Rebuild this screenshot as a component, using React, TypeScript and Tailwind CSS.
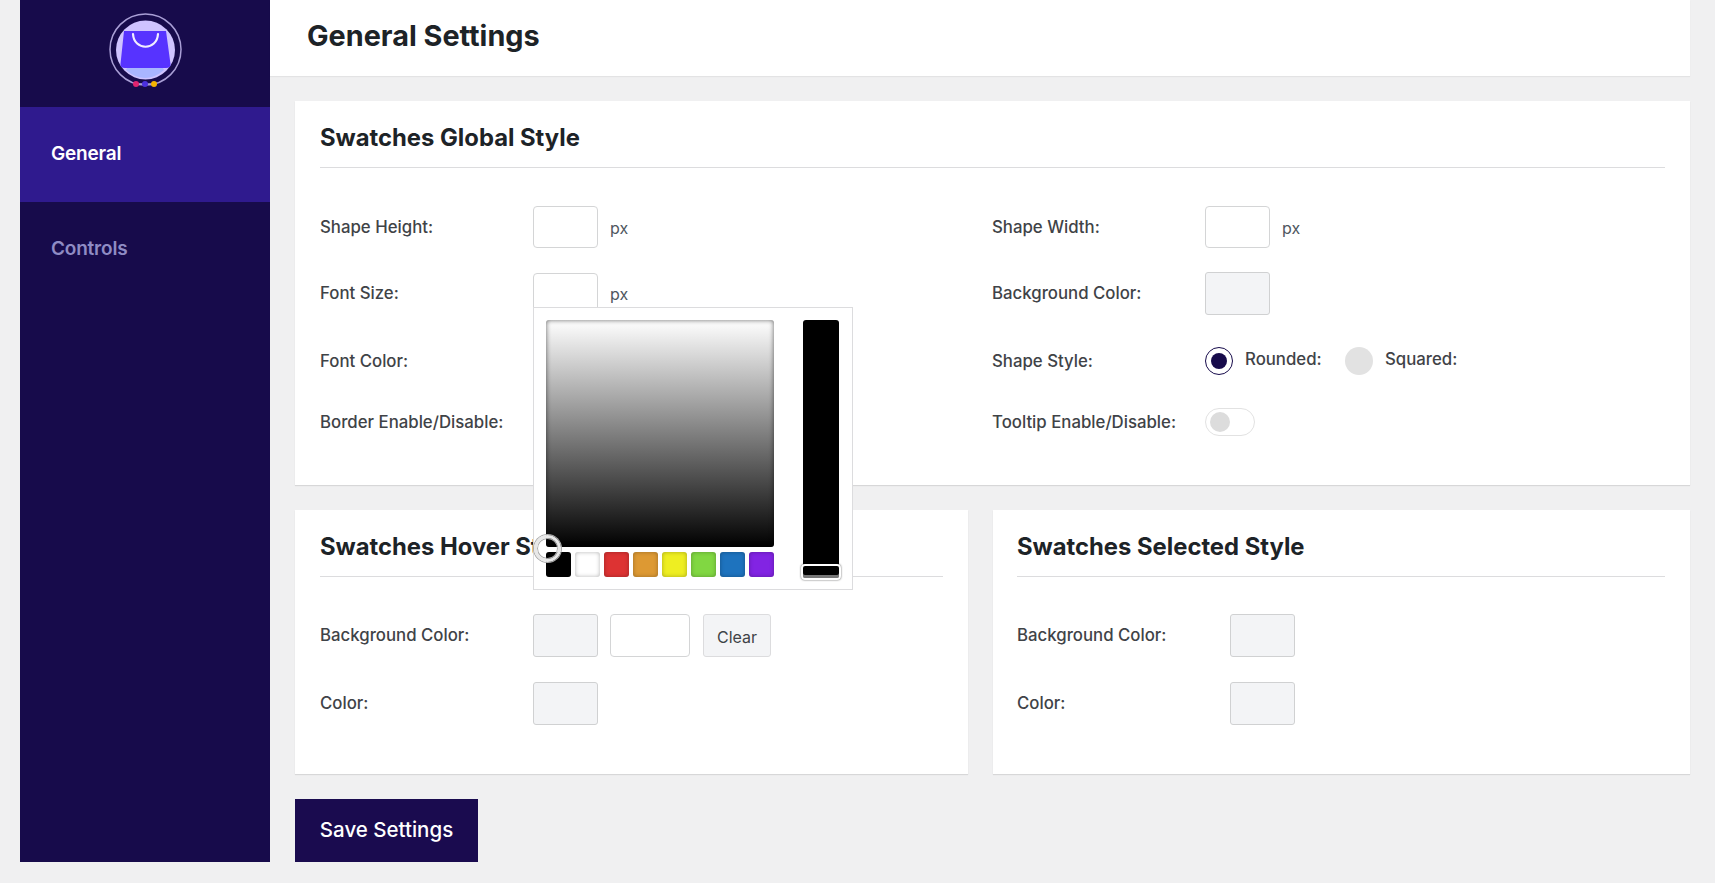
const swatches = ['#000000', '#ffffff', '#dd3333', '#dd9933', '#eeee22', '#81d742', '#1e73be', '#8224e3'];

function Logo() {
    return (
        <svg width="80" height="80" viewBox="0 0 80 80" fill="none">
            <circle cx="40.5" cy="39.5" r="35.5" stroke="#a99fd6" strokeWidth="1.5" />
            <circle cx="40.5" cy="40" r="29.5" fill="#cfc3ff" />
            <path d="M19 21 H61 L65.5 54 Q66 58 61 58 H20 Q15 58 15.5 54 Z" fill="#5733ff" />
            <path d="M22 58 H58 L59 60 Q50 68 40 68 Q30 68 21 60 Z" fill="#a9b5ff" />
            <path d="M28 24 C29 41 52 41 53 24" stroke="#f1edff" strokeWidth="2.2" strokeLinecap="round" />
            <path d="M31 74 H49" stroke="#a99fd6" strokeWidth="1.5" />
            <circle cx="31" cy="74" r="3" fill="#e0246f" />
            <circle cx="40" cy="74" r="3" fill="#4b30e0" />
            <circle cx="49" cy="74" r="3" fill="#f5b400" />
        </svg>
    );
}

function Label({ children }: { children: React.ReactNode }) {
    return <span className="mb-px w-[213px] shrink-0 text-[16.8px] font-medium leading-6 text-[#3f4347]">{children}</span>;
}

function TextBox({ width = 'w-[65px]' }: { width?: string }) {
    return <input className={`${width} h-[42px] rounded-[4px] border border-[#d4d5d6] bg-white`} />;
}

function ColorBox() {
    return <button className="h-[43px] w-[65px] rounded-[3px] border border-[#d0d1d2] bg-[#f3f4f6]" />;
}

function Px() {
    return <span className="ml-[12px] mt-px text-[16px] text-[#50575e]">px</span>;
}

function Heading({ children }: { children: React.ReactNode }) {
    return (
        <h2 className="border-b border-[#dcdcde] pb-[11px] text-[23.8px] font-bold leading-[37px] text-[#1d2327]">
            {children}
        </h2>
    );
}

function ColorPicker() {
    return (
        <div className="absolute left-0 top-[34px] z-10 flex h-[283px] w-[320px] gap-[29px] border border-[#dcdcde] bg-white pl-[12px] pt-[12px]">
            <div className="relative w-[228px]">
                <div className="h-[227px] rounded-[3px] bg-[linear-gradient(to_bottom,#ffffff,#000000)] shadow-[inset_0_0_5px_rgba(0,0,0,0.6)]" />
                <div className="mt-[5px] flex gap-[4px]">
                    {swatches.map((color) => (
                        <span
                            key={color}
                            className="h-[25px] w-[25px] rounded-[3px] shadow-[inset_0_0_4px_rgba(0,0,0,0.3)]"
                            style={{ backgroundColor: color }}
                        />
                    ))}
                </div>
                <span className="absolute left-[-12px] top-[215px] h-[27px] w-[27px] rounded-full border-[3px] border-[#e8e8e8] shadow-[0_0_0_1px_#aaa,inset_0_0_0_1px_#aaa]" />
            </div>
            <div className="relative h-[257px] w-[36px] rounded-[3px] bg-black">
                <span className="absolute bottom-[-3px] left-[-2px] h-[16px] w-[40px] rounded-[4px] border-[2px] border-white bg-black shadow-[0_0_2px_rgba(0,0,0,0.7),inset_0_-3px_0_#777]" />
            </div>
        </div>
    );
}

export default function App() {
    return (
        <div className="flex h-[883px] overflow-hidden bg-[#f0f0f1] pb-[21px] pl-[20px] pr-[25px] font-['Inter',sans-serif]">
            {/* Sidebar */}
            <aside className="w-[250px] shrink-0 bg-[#170b4b]">
                <div className="flex h-[107px] justify-center pt-[10px]">
                    <Logo />
                </div>
                <div className="flex h-[95px] items-center bg-[#2f1a8e] pl-[31px] text-[19px] font-semibold tracking-[-0.2px] text-white">General</div>
                <div className="flex h-[95px] items-center pl-[31px] text-[19px] font-semibold tracking-[-0.2px] text-[#8f8cc4]">Controls</div>
            </aside>

            <main className="min-w-0 flex-1">
                <div className="flex h-[76px] items-center bg-white pl-[37px] shadow-[0_1px_1px_rgba(0,0,0,0.05)]">
                    <h1 className="mb-[4px] text-[28.8px] font-bold text-[#1d2327]">General Settings</h1>
                </div>

                <div className="pl-[25px]">
                    {/* Global style */}
                    <section className="mt-[25px] h-[384px] bg-white px-[25px] pt-[18px] shadow-[0_1px_1px_rgba(0,0,0,0.1)]">
                        <Heading>Swatches Global Style</Heading>
                        <div className="mt-[38px] grid grid-cols-[672px_1fr]">
                            <div>
                                <div className="flex h-[42px] items-center">
                                    <Label>Shape Height:</Label>
                                    <TextBox />
                                    <Px />
                                </div>
                                <div className="mt-[24px] flex h-[43px] items-center">
                                    <Label>Font Size:</Label>
                                    <div className="relative">
                                        <TextBox />
                                        <ColorPicker />
                                    </div>
                                    <Px />
                                </div>
                                <div className="mt-[32px] flex h-[28px] items-center">
                                    <Label>Font Color:</Label>
                                </div>
                                <div className="mt-[33px] flex h-[28px] items-center">
                                    <Label>Border Enable/Disable:</Label>
                                </div>
                            </div>
                            <div>
                                <div className="flex h-[42px] items-center">
                                    <Label>Shape Width:</Label>
                                    <TextBox />
                                    <Px />
                                </div>
                                <div className="mt-[24px] flex h-[43px] items-center">
                                    <Label>Background Color:</Label>
                                    <ColorBox />
                                </div>
                                <div className="mt-[32px] flex h-[28px] items-center">
                                    <Label>Shape Style:</Label>
                                    <span className="flex h-[28px] w-[28px] items-center justify-center rounded-full border border-[#170b4b] bg-white">
                                        <span className="h-[16px] w-[16px] rounded-full bg-[#170b4b]" />
                                    </span>
                                    <span className="mb-[2px] ml-[12px] w-[100px] text-[16.8px] font-medium text-[#3f4347]">Rounded:</span>
                                    <span className="h-[28px] w-[28px] rounded-full bg-[#e2e2e2]" />
                                    <span className="mb-[2px] ml-[12px] text-[16.8px] font-medium text-[#3f4347]">Squared:</span>
                                </div>
                                <div className="mt-[33px] flex h-[28px] items-center">
                                    <Label>Tooltip Enable/Disable:</Label>
                                    <span className="flex h-[28px] w-[50px] items-center rounded-full border border-[#e2e2e2] bg-white pl-[4px]">
                                        <span className="h-[20px] w-[20px] rounded-full bg-[#dcdcdc]" />
                                    </span>
                                </div>
                            </div>
                        </div>
                    </section>

                    <div className="mt-[25px] grid grid-cols-[673px_1fr] gap-x-[25px]">
                        {/* Hover style */}
                        <section className="h-[264px] bg-white px-[25px] pt-[18px] shadow-[0_1px_1px_rgba(0,0,0,0.1)]">
                            <Heading>Swatches Hover Style</Heading>
                            <div className="mt-[37px] flex h-[43px] items-center">
                                <Label>Background Color:</Label>
                                <ColorBox />
                                <input className="ml-[12px] h-[43px] w-[80px] rounded-[4px] border border-[#d4d5d6] bg-white" />
                                <button className="ml-[13px] h-[43px] w-[68px] rounded-[3px] border border-[#dcdcde] bg-[#f3f4f6] pt-[3px] text-[16px] text-[#3f4347]">
                                    Clear
                                </button>
                            </div>
                            <div className="mt-[25px] flex h-[43px] items-center">
                                <Label>Color:</Label>
                                <ColorBox />
                            </div>
                        </section>

                        {/* Selected style */}
                        <section className="h-[264px] bg-white pl-[24px] pr-[25px] pt-[18px] shadow-[0_1px_1px_rgba(0,0,0,0.1)]">
                            <Heading>Swatches Selected Style</Heading>
                            <div className="mt-[37px] flex h-[43px] items-center">
                                <Label>Background Color:</Label>
                                <ColorBox />
                            </div>
                            <div className="mt-[25px] flex h-[43px] items-center">
                                <Label>Color:</Label>
                                <ColorBox />
                            </div>
                        </section>
                    </div>

                    <button className="mt-[25px] h-[63px] w-[183px] bg-[#1a0b4f] text-[20.5px] font-medium text-white">Save Settings</button>
                </div>
            </main>
        </div>
    );
}
